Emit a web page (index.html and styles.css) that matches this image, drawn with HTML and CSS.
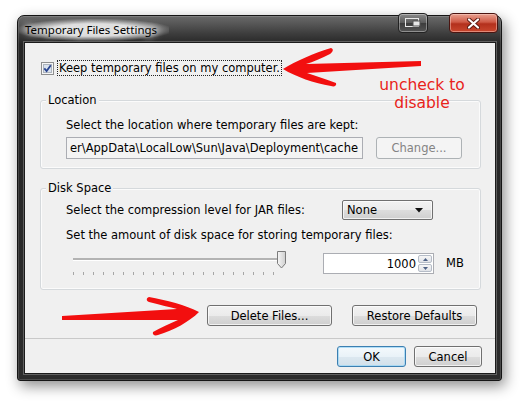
FILE: index.html
```html
<!doctype html>
<html>
<head>
    <meta charset="utf-8">
    <title>Temporary Files Settings</title>
    <link rel="stylesheet" href="styles.css">
</head>
<body>
<div class="window">
    <div class="titlebar">
        <span class="title">Temporary Files Settings</span>
        <span class="tb-btn tb-tray">
            <svg width="16" height="10" viewBox="0 0 16 10"><rect x="0.5" y="0.5" width="13" height="8" fill="none" stroke="#e8e8e8"/><rect x="8" y="3" width="7" height="5" fill="#e8e8e8" stroke="#555"/></svg>
        </span>
        <span class="tb-btn tb-close">
            <svg width="13" height="11" viewBox="0 0 13 11"><path d="M2 1.5 L11 9.5 M11 1.5 L2 9.5" stroke="#5a1a12" stroke-width="4" stroke-linecap="round"/><path d="M2 1.5 L11 9.5 M11 1.5 L2 9.5" stroke="#fff" stroke-width="2.2" stroke-linecap="round"/></svg>
        </span>
    </div>
    <div class="client">
        <div class="main">
            <div class="keep">
                <svg class="check" width="13" height="13" viewBox="0 0 13 13"><rect x="0.5" y="0.5" width="12" height="12" fill="#f6f6f6" stroke="#8e8f8f"/><rect x="2.5" y="2.5" width="8" height="8" fill="#d9e2ee" stroke="#adb4bd"/><path d="M3.3 6.3 L5.6 9 L9.8 3.2" fill="none" stroke="#2a4590" stroke-width="1.8"/></svg>
                <span class="focus">Keep temporary files on my computer.</span>
            </div>

            <div class="group">
                <div class="group-title">Location</div>
                <div class="line">Select the location where temporary files are kept:</div>
                <div class="field-row">
                    <div class="path"><span>er\AppData\LocalLow\Sun\Java\Deployment\cache</span></div>
                    <div class="btn disabled change">Change...</div>
                </div>
            </div>

            <div class="group disk">
                <div class="group-title">Disk Space</div>
                <div class="combo-row">
                    <span class="combo-label">Select the compression level for JAR files:</span>
                    <div class="combo">
                        <span>None</span>
                        <svg width="8" height="5" viewBox="0 0 8 5"><path d="M0 0 H8 L4 4.5 Z" fill="#111"/></svg>
                    </div>
                </div>
                <div class="line">Set the amount of disk space for storing temporary files:</div>
                <div class="slider-row">
                    <div class="slider">
                        <div class="track"></div>
                        <svg class="thumb" width="11" height="18" viewBox="0 0 11 18">
                            <defs><linearGradient id="tg" x1="0" x2="1"><stop offset="0" stop-color="#f6f6f6"/><stop offset="1" stop-color="#cfcfcf"/></linearGradient></defs>
                            <path d="M1.5 0.5 H9.5 V12.5 L5.5 17 L1.5 12.5 Z" fill="url(#tg)" stroke="#7b7b7b"/>
                        </svg>
                        <div class="ticks"></div>
                    </div>
                    <div class="spin">
                        <span class="spin-value">1000</span>
                        <div class="spin-btns">
                            <span><svg width="5" height="3" viewBox="0 0 5 3"><path d="M0 3 L2.5 0 L5 3 Z" fill="#4d6185"/></svg></span>
                            <span><svg width="5" height="3" viewBox="0 0 5 3"><path d="M0 0 L2.5 3 L5 0 Z" fill="#4d6185"/></svg></span>
                        </div>
                    </div>
                    <span class="unit">MB</span>
                </div>
            </div>

            <div class="actions">
                <div class="btn wide">Delete Files...</div>
                <div class="btn wide">Restore Defaults</div>
            </div>
        </div>
        <div class="footer">
            <div class="btn default ok">OK</div>
            <div class="btn cancel">Cancel</div>
        </div>
    </div>
</div>

<!-- rote Markierungen ueber dem Dialog -->
<svg class="marks" width="521" height="402" viewBox="0 0 521 402">
    <path d="M283 69 C296 61 314 53 331 48 C334 49 333 52 330 54 C322 58 313 62 306 64 L421 61 L421 66 L307 73 C317 76 327 80 336 83 C337 86 334 87 331 86 C314 83 296 77 283 69 Z" fill="#f20f0f"/>
    <path d="M199 312 C186 305 166 300 149 297 C146 298 146 301 149 302 C160 305 170 307 177 309 L62 316 L62 320 L178 320 C169 324 160 328 153 332 C152 335 155 336 158 335 C174 330 189 322 199 312 Z" fill="#f20f0f"/>
</svg>
<div class="note">uncheck to<br>disable</div>
</body>
</html>
```

FILE: styles.css
```css
body {
    margin: 0;
    width: 521px;
    height: 402px;
    position: relative;
    overflow: hidden;
    background: #fff;
    font-family: "DejaVu Sans", sans-serif;
    font-size: 11.5px;
    color: #000;
}

/* Fensterrahmen */
.window {
    margin: 15px 0 0 17px;
    width: 485px;
    height: 366px;
    box-sizing: border-box;
    border: 1px solid #151515;
    border-radius: 7px 7px 3px 3px;
    background: linear-gradient(#6a6a6a 0px, #3c3c3c 18px, #262626 28px, #2c2c2c 100%);
    box-shadow: 3px 5px 14px rgba(0, 0, 0, 0.45), inset 0 0 0 1px rgba(255, 255, 255, 0.15);
    display: flex;
    flex-direction: column;
}

.titlebar {
    height: 26px;
    display: flex;
    align-items: flex-start;
    padding-left: 1px;
}

.title {
    margin-top: 3px;
    padding: 3px 12px 4px 6px;
    font-family: "Noto Sans", sans-serif;
    font-size: 11.5px;
    color: #000;
    background: radial-gradient(ellipse at center, rgba(255, 255, 255, 0.8) 40%, rgba(255, 255, 255, 0) 75%);
    text-shadow: 0 0 6px #fff, 0 0 8px #fff;
}

.tb-btn {
    margin-top: -3px;
    height: 20px;
    box-sizing: border-box;
    border: 1px solid #222;
    border-radius: 4px;
    display: flex;
    align-items: center;
    justify-content: center;
}

.tb-tray {
    margin-left: auto;
    width: 30px;
    background: linear-gradient(#8a8a8a, #5a5a5a 50%, #3c3c3c 51%, #555);
    box-shadow: inset 0 0 0 1px rgba(255, 255, 255, 0.35);
}

.tb-close {
    margin-left: 21px;
    margin-right: 3px;
    width: 49px;
    border-color: #4a1410;
    background: linear-gradient(#e8a090, #cf5a46 45%, #b3301c 55%, #c9472e);
    box-shadow: inset 0 0 0 1px rgba(255, 220, 210, 0.45);
}

/* Inhaltsbereich */
.client {
    margin: 0 5px 6px 6px;
    flex: 1;
    background: #f0f0f0;
    border: 1px solid #1b1b1b;
    box-shadow: 0 0 0 1px rgba(255, 255, 255, 0.25);
    display: flex;
    flex-direction: column;
}

.main {
    height: 295px;
    box-sizing: border-box;
    padding: 17px 14px 0 15px;
    display: flex;
    flex-direction: column;
}

.keep {
    height: 16px;
    display: flex;
    align-items: center;
}

.check {
    margin-left: 1px;
}

.focus {
    margin-left: 3px;
    height: 16px;
    box-sizing: border-box;
    padding: 0 1px;
    line-height: 14px;
    border: 1px dotted #222;
}

.group {
    margin-top: 24px;
    border: 1px solid #d5d9dc;
    border-radius: 3px;
    box-shadow: inset 0 0 0 1px #fbfbfb;
    padding: 0 0 9px 25px;
}

.group.disk {
    margin-top: 19px;
    padding-bottom: 13px;
}

.group-title {
    margin: -8px 0 0 -20px;
    width: fit-content;
    height: 14px;
    line-height: 14px;
    padding: 0 2px;
    background: #f0f0f0;
}

.line {
    margin-top: 11px;
    height: 14px;
    line-height: 14px;
}

.disk .line {
    margin-top: 8px;
}

.field-row {
    margin-top: 5px;
    display: flex;
    gap: 13px;
}

.path {
    width: 297px;
    height: 22px;
    box-sizing: border-box;
    border: 1px solid #abadb3;
    background: #f4f4f4;
    padding-right: 4px;
    display: flex;
    align-items: center;
    justify-content: flex-end;
    overflow: hidden;
    white-space: nowrap;
}

/* Schaltflaechen im Windows-7-Stil */
.btn {
    height: 21px;
    box-sizing: border-box;
    border: 1px solid #707070;
    border-radius: 3px;
    background: linear-gradient(#f2f2f2, #ebebeb 50%, #dddddd 51%, #cfcfcf);
    box-shadow: inset 0 0 0 1px rgba(255, 255, 255, 0.7);
    display: flex;
    align-items: center;
    justify-content: center;
}

.btn.change {
    width: 86px;
    height: 22px;
}

.btn.disabled {
    border-color: #adb2b5;
    background: #f4f4f4;
    box-shadow: none;
    color: #838383;
}

.btn.wide {
    width: 125px;
}

.btn.default {
    border-color: #3c7fb1;
    background: linear-gradient(#f4f9fc, #e9f2f8 50%, #dce8f0 51%, #d2e0ea);
    box-shadow: inset 0 0 0 1px rgba(160, 215, 245, 0.8);
}

.combo-row {
    margin-top: 5px;
    height: 20px;
    display: flex;
    align-items: center;
}

.combo-label {
    width: 276px;
}

.combo {
    width: 91px;
    height: 20px;
    box-sizing: border-box;
    border: 1px solid #707070;
    border-radius: 2px;
    background: linear-gradient(#f2f2f2, #ebebeb 50%, #dddddd 51%, #cfcfcf);
    box-shadow: inset 0 0 0 1px rgba(255, 255, 255, 0.7);
    padding: 0 9px 0 4px;
    display: flex;
    align-items: center;
    justify-content: space-between;
}

.slider-row {
    margin-top: 8px;
    height: 26px;
    display: flex;
    align-items: flex-start;
}

.slider {
    position: relative;
    margin-left: 3px;
    width: 220px;
    height: 26px;
}

.track {
    margin: 8px 0 0 4px;
    width: 207px;
    height: 2px;
    background: #b3b3b3;
    border-bottom: 1px solid #fff;
}

.thumb {
    position: absolute;
    left: 207px;
    top: 1px;
}

.ticks {
    margin: 11px 0 0 4px;
    width: 201px;
    height: 3px;
    background: repeating-linear-gradient(90deg, #a6a6a6 0 1px, transparent 1px 10px);
}

.spin {
    margin: 3px 0 0 34px;
    width: 111px;
    height: 21px;
    box-sizing: border-box;
    border: 1px solid #abadb3;
    background: #fff;
    display: flex;
    justify-content: flex-end;
    align-items: center;
    padding-right: 1px;
}

.spin-value {
    margin-right: 2px;
}

.spin-btns {
    width: 14px;
    height: 17px;
    display: flex;
    flex-direction: column;
    gap: 1px;
}

.spin-btns span {
    flex: 1;
    border: 1px solid #b5bcc7;
    border-radius: 2px;
    background: linear-gradient(#f6f6f6, #e0e3e8);
    display: flex;
    align-items: center;
    justify-content: center;
}

.unit {
    margin: 6px 0 0 12px;
}

.actions {
    margin-top: 15px;
    padding-right: 4px;
    display: flex;
    justify-content: flex-end;
    gap: 20px;
}

.footer {
    border-top: 1px solid #c9c9c9;
    padding: 7px 13px 0 0;
    display: flex;
    justify-content: flex-end;
    gap: 8px;
}

.btn.ok {
    width: 69px;
}

.btn.cancel {
    width: 68px;
}

/* Anmerkungen (liegen ueber dem Screenshot) */
.marks {
    position: absolute;
    left: 0;
    top: 0;
    pointer-events: none;
}

.note {
    position: absolute;
    left: 372px;
    top: 76px;
    width: 100px;
    text-align: center;
    font-size: 15.5px;
    line-height: 18px;
    color: #e8231a;
}
```
